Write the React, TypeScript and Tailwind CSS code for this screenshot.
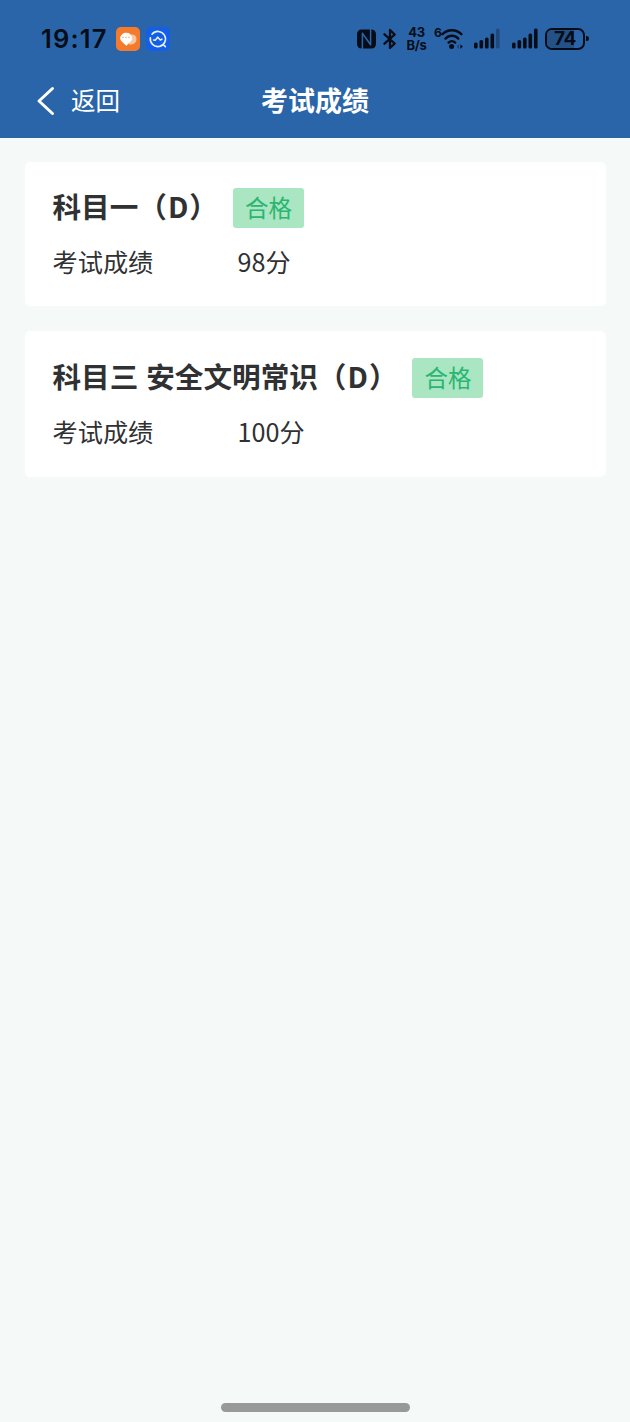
import type { ReactNode } from 'react'

type Score = {
	subject: string
	status: string
	score: string
	className: string
}

const scores: Score[] = [
	{
		subject: '科目一',
		status: '合格',
		score: '98分',
		className: 'h-36 pt-[26px]',
	},
	{
		subject: '科目三 安全文明常识',
		status: '合格',
		score: '100分',
		className: 'h-[146px] pt-[27px]',
	},
]

function HeartAppIcon() {
	return (
		<svg width="24" height="24" viewBox="0 0 24 24">
			<rect width="24" height="24" rx="5" fill="#f47a2c" />
			<path
				d="M13 17.5c4 .6 7.3-1.4 7.5-5.2.2-3.6-3-5.6-6.2-4.6Z"
				fill="#fbc7a2"
			/>
			<path
				d="M10.3 18.3 5.4 13.8a5 5 0 0 1 4.9-7.6 5 5 0 0 1 4.8 7.4Z"
				fill="#fff"
				stroke="#fff"
				strokeLinejoin="round"
			/>
			<path
				d="M6.4 10.4h1.3M9.4 10.4h1.3M12.3 10.4h1.3"
				stroke="#f5a06b"
				strokeWidth="1.2"
			/>
		</svg>
	)
}

function SearchAppIcon() {
	return (
		<svg width="24" height="24" viewBox="0 0 24 24" fill="none">
			<rect width="24" height="24" rx="5" fill="#145fe8" />
			<g
				stroke="#e6f1ff"
				strokeWidth="1.6"
				strokeLinecap="round"
				strokeLinejoin="round"
			>
				<path d="M6 7.2a7.6 7.6 0 1 1-1.6 3.5M17 17.2l2.4 2.4" />
				<path d="m7.6 13 1.6.2 2.5-3 2.6 2.8 1.6-.8" />
			</g>
		</svg>
	)
}

function NfcIcon() {
	return (
		<svg width="19" height="20" viewBox="0 0 19 20" fill="none">
			<rect y="0.5" width="19" height="19" rx="4.5" fill="#060d18" />
			<path
				d="M5.4 17.2V4.2l8.2 11.6V2.8"
				stroke="#2b65a9"
				strokeWidth="1.5"
				strokeLinejoin="round"
			/>
			<path d="M5.4 20v-3M13.6 0v3" stroke="#2b65a9" strokeWidth="1.5" />
		</svg>
	)
}

function BluetoothIcon() {
	return (
		<svg width="14" height="22" viewBox="0 0 14 22" fill="none">
			<path
				d="m1.5 6.3 10.2 9.2L7 20V2l4.7 4.5-10.2 9.2"
				stroke="#060d18"
				strokeWidth="2.3"
				strokeLinecap="round"
				strokeLinejoin="round"
			/>
		</svg>
	)
}

function WifiIcon() {
	return (
		<svg width="24" height="22" viewBox="0 0 24 22" fill="none">
			<g stroke="#060d18" strokeWidth="2.4" strokeLinecap="round">
				<path d="M1.4 6.2c5.2-5.2 13.8-5.2 19 0" />
				<path d="M4.5 10.6c3.6-3.8 9.2-3.8 12.8 0" />
				<path d="M7.6 14.6c1.9-1.9 4.7-1.9 6.6 0" />
			</g>
			<circle cx="10.6" cy="18.6" r="2.5" fill="#060d18" />
			<path d="m18 16.2-2.4 2.4 2.4 2.4Z" fill="#1c4678" />
			<path d="m19.4 16.2 2.4 2.4-2.4 2.4Z" fill="#060d18" />
		</svg>
	)
}

function SignalIcon({ full = false }: { full?: boolean }) {
	return (
		<svg width="26" height="21" viewBox="0 0 26 21">
			<g fill="#060d18">
				<rect x="0" y="14.5" width="3.6" height="6" rx="1.5" />
				<rect x="5.5" y="12" width="3.6" height="8.5" rx="1.5" />
				<rect x="11" y="9.5" width="3.6" height="11" rx="1.5" />
				<rect x="16.5" y="5.5" width="3.6" height="15" rx="1.5" />
				<rect
					x="22"
					y="0.5"
					width="3.6"
					height="20"
					rx="1.5"
					opacity={full ? 1 : 0.3}
				/>
			</g>
		</svg>
	)
}

function Battery({ level }: { level: number }) {
	return (
		<div className="flex items-center gap-px">
			<div className="relative flex h-[22px] w-10 items-center justify-center rounded-[7px] border-2 border-[#060d18]">
				<div
					className="absolute inset-y-0 left-0 rounded-l-[5px] bg-[#245288]"
					style={{ width: `${level}%` }}
				/>
				<span className="relative text-[19px] leading-6 font-bold tracking-[-0.3px]">
					{level}
				</span>
			</div>
			<div className="h-[5px] w-[3px] rounded-r-full bg-[#060d18]" />
		</div>
	)
}

function StatusBar() {
	return (
		<div className="flex h-[76px] items-center justify-between pt-px pr-[41px] pl-[41px] font-[Inter,sans-serif] text-[#060d18]">
			<div className="flex items-center">
				<span className="w-[75px] text-[25.5px] leading-none font-semibold tracking-[1.2px]">
					19:17
				</span>
				<HeartAppIcon />
				<span className="w-1.5" />
				<SearchAppIcon />
			</div>
			<div className="flex items-center">
				<NfcIcon />
				<span className="ml-[7px]">
					<BluetoothIcon />
				</span>
				<div className="ml-[9px] flex w-[21px] flex-col items-center text-[13px] leading-[12.5px] font-bold tracking-[-0.3px]">
					<span>43</span>
					<span>B/s</span>
				</div>
				<span className="mb-3 ml-[7px] w-[7px] text-[12px] leading-none font-bold">
					6
				</span>
				<WifiIcon />
				<span className="ml-[9px]">
					<SignalIcon />
				</span>
				<span className="ml-3">
					<SignalIcon full />
				</span>
				<span className="ml-[7px]">
					<Battery level={74} />
				</span>
			</div>
		</div>
	)
}

function NavBar() {
	return (
		<div className="grid h-[62px] grid-cols-3 items-start pt-1 text-white">
			<div className="flex h-10 items-center pl-9">
				<svg width="20" height="32" viewBox="0 0 20 32" fill="none">
					<path
						d="M16.5 4.5 3 17l13.5 12.5"
						stroke="currentColor"
						strokeWidth="3"
						strokeLinecap="round"
						strokeLinejoin="round"
					/>
				</svg>
				<span className="ml-[15px] text-[24.5px] leading-10">
					返回
				</span>
			</div>
			<h1 className="text-center text-[27px] leading-[39px] font-bold">
				考试成绩
			</h1>
		</div>
	)
}

function Badge({ children }: { children: ReactNode }) {
	return (
		<span className="ml-[15px] flex h-10 w-[71px] items-center justify-center rounded-[3px] bg-[#a9e6c1] text-[23.5px] leading-none text-[#2bb573]">
			{children}
		</span>
	)
}

function ScoreCard({ subject, status, score, className }: Score) {
	return (
		<section className={`rounded-[5px] bg-white pl-[27.5px] ${className}`}>
			<div className="flex h-10 items-center">
				<h2 className="mb-1 text-[28.6px] leading-9 font-bold whitespace-pre [word-spacing:1.5px]">
					{subject}（<span className="mx-px">D</span>）
				</h2>
				<Badge>{status}</Badge>
			</div>
			<div className="mt-[13px] flex text-[25.2px] leading-10">
				<span className="w-[185px]">考试成绩</span>
				<span>{score}</span>
			</div>
		</section>
	)
}

export default function App() {
	return (
		<div className="flex h-[1422px] w-[630px] flex-col bg-[#f5f9f8] font-['Noto_Sans_CJK_SC',sans-serif] text-[#303133]">
			<header className="h-[138px] bg-[#2b65a9]">
				<StatusBar />
				<NavBar />
			</header>
			<main className="flex flex-1 flex-col gap-[25px] pt-6 pr-6 pl-[25px]">
				{scores.map((item) => (
					<ScoreCard key={item.subject} {...item} />
				))}
			</main>
			<div className="mx-auto mb-2.5 h-[9px] w-[189px] rounded-full bg-[#989a99]" />
		</div>
	)
}
